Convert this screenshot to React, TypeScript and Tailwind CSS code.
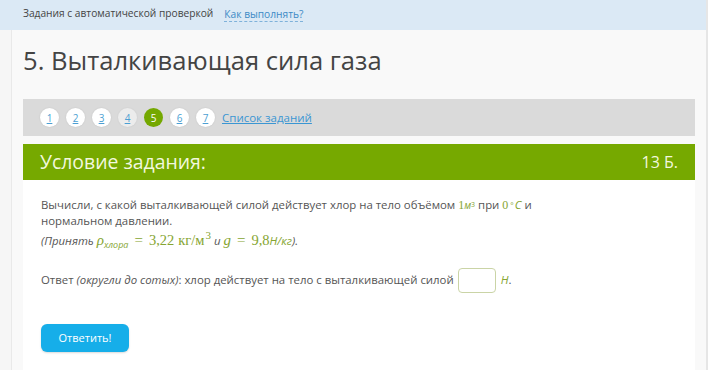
import React from "react";

const pages = [1, 2, 3, 4, 5, 6, 7];

// small pieces of formula text
function M({ children, className = "" }: { children: React.ReactNode; className?: string }) {
  return (
    <span className={"font-['Liberation_Serif','DejaVu_Serif',serif] text-[#86a532] leading-none " + className}>
      {children}
    </span>
  );
}

export default function App() {
  return (
    <div className="w-[720px] h-[370px] overflow-hidden bg-white flex font-['Open_Sans',sans-serif]">
      <div className="w-[708px] flex flex-col bg-[#f6f6f6] border-r-2 border-[#e6e6e6]">
        {/* top strip */}
        <div className="h-[30px] shrink-0 bg-[#dbe9f5] flex items-center pl-[23px] gap-[11px] text-[10.2px] pb-[2px]">
          <span className="text-[#444]">Задания с автоматической проверкой</span>
          <span className="text-[#3b89c5] border-b border-dashed border-[#7fb2da] leading-[14px]">
            Как выполнять?
          </span>
        </div>

        {/* card */}
        <div className="flex-1 ml-[11px] bg-[#f9f9f9] border-l border-[#e9e9e9] pl-[11px] pr-[11px] flex flex-col">
          <h1 className="text-[25.6px] text-[#444] leading-[26px] pt-[18px] pb-[25px]">
            5. Выталкивающая сила газа
          </h1>

          {/* pager */}
          <div className="h-[37px] shrink-0 bg-[#dadada] flex items-center pl-[17px] gap-[7px]">
            {pages.map((p) => (
              <span
                key={p}
                className={
                  "w-[19px] h-[19px] rounded-full flex items-center justify-center text-[10px] leading-none " +
                  (p === 5
                    ? "bg-[#74a800] text-white"
                    : p === 4
                    ? "bg-[#ececec] text-[#4c9fd3] underline shadow-[0_0_2px_rgba(0,0,0,0.08)]"
                    : "bg-white text-[#4c9fd3] underline shadow-[0_0_2px_rgba(0,0,0,0.1)]")
                }
              >
                {p}
              </span>
            ))}
            <span className="text-[11.5px] text-[#3a96d3] underline">Список заданий</span>
          </div>

          {/* task header */}
          <div className="mt-[8px] h-[36px] shrink-0 bg-[#76a900] flex items-center justify-between pl-[17px] pr-[17px]">
            <span className="text-[19.4px] text-[#f2f8de]">Условие задания:</span>
            <span className="text-[16px] text-[#f2f8de]">13 Б.</span>
          </div>

          {/* task body */}
          <div className="flex-1 bg-white pl-[18px] pt-[17px] text-[11.4px] text-[#555]">
            <p className="leading-[16px]">
              Вычисли, с какой выталкивающей силой действует хлор на тело объёмом{" "}
              <M className="text-[12px]">1</M>
              <span className="italic text-[#86a532] text-[10px]">м</span>
              <span className="text-[#86a532] text-[7px] align-top">3</span> при{" "}
              <M className="text-[12px]">0</M>
              <span className="text-[#86a532] text-[8px] align-top ml-[2px]">°</span>
              <span className="italic text-[#86a532] ml-[1px]">C</span> и
              <br />
              нормальном давлении.
            </p>
            <p className="italic leading-[16px] mt-[1px]">
              (Принять <M className="italic text-[15px]">ρ</M>
              <span className="text-[#86a532] text-[9px] leading-none align-[-3px]">хлора</span>
              <M className="text-[15px] not-italic mx-[6px]">=</M>
              <M className="text-[14.5px] not-italic">3,22</M>
              <M className="text-[14.5px] not-italic ml-[4px]">кг/м</M>
              <M className="text-[11px] not-italic align-[6px] ml-[1px]">3</M> и{" "}
              <M className="italic text-[15px]">g</M>
              <M className="text-[15px] not-italic mx-[6px]">=</M>
              <M className="text-[14.5px] not-italic">9,8</M>
              <span className="text-[#86a532]">Н/кг</span>).
            </p>

            <div className="flex items-center mt-[18px] h-[26px]">
              <span>
                Ответ <span className="italic">(округли до сотых)</span>: хлор действует на тело с выталкивающей силой
              </span>
              <span className="ml-[4px] w-[38px] h-[25px] rounded-[4px] border border-[#cad4a6] bg-white" />
              <span className="ml-[5px] italic text-[#86a532]">Н</span>
              <span>.</span>
            </div>

            <button className="mt-[31px] w-[88px] h-[28px] rounded-[6px] bg-[#16aee9] text-white text-[11px] shadow-[0_1px_2px_rgba(0,0,0,0.15)]">
              Ответить!
            </button>
          </div>
        </div>
      </div>
      <div className="flex-1 bg-white" />
    </div>
  );
}
